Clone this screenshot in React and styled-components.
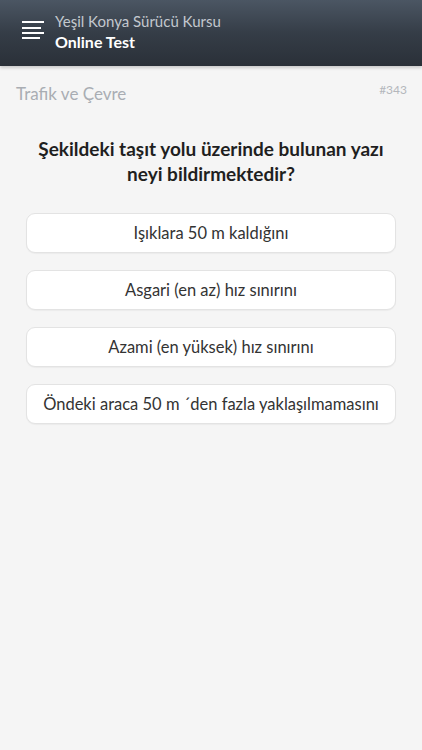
import React from 'react'
import styled, { createGlobalStyle } from 'styled-components'

const GlobalStyle = createGlobalStyle`
  html, body {
    margin: 0;
    padding: 0;
    background: #f5f5f5;
  }
  body {
    font-family: Lato, "Open Sans", "Noto Sans", sans-serif;
  }
`

const Page = styled.div`
  width: 422px;
  min-height: 750px;
  background: #f5f5f5;
  display: flex;
  flex-direction: column;
`

const Header = styled.header`
  height: 66px;
  box-sizing: border-box;
  padding: 0 0 0 22px;
  display: flex;
  align-items: center;
  gap: 11px;
  background: linear-gradient(to bottom, #4b5663 0%, #353d47 50%, #2a3038 100%);
  box-shadow: 0 2px 3px rgba(0, 0, 0, 0.18);
  position: relative;
  z-index: 1;
`

const MenuSvg = styled.svg`
  display: block;
  flex: none;
  margin-top: -4px;
`

const Titles = styled.div`
  display: flex;
  flex-direction: column;
  gap: 1px;
  margin-top: -3px;
`

const AppName = styled.div`
  color: #c3c8ce;
  font-size: 15px;
  line-height: 19px;
`

const ScreenName = styled.div`
  color: #ffffff;
  font-size: 16px;
  font-weight: 700;
  line-height: 20px;
`

const Body = styled.main`
  padding: 16px 26px 0;
  display: flex;
  flex-direction: column;
`

const TopRow = styled.div`
  display: flex;
  justify-content: space-between;
  align-items: flex-start;
  margin: 0 -11px 0 -10px;
`

const Category = styled.div`
  color: #a9adb3;
  font-size: 17px;
  line-height: 24px;
`

const Number = styled.div`
  color: #b4b7bc;
  font-size: 12px;
  line-height: 16px;
`

const Question = styled.h1`
  margin: 30px 0 27px;
  text-align: center;
  color: #1f1f1f;
  font-size: 19px;
  font-weight: 700;
  line-height: 25px;
`

const Options = styled.div`
  display: flex;
  flex-direction: column;
  gap: 17px;
`

const Option = styled.button`
  height: 40px;
  width: 100%;
  border: 1px solid #e3e3e3;
  border-radius: 9px;
  background: #ffffff;
  box-shadow: 0 1px 1px rgba(0, 0, 0, 0.04);
  color: #333333;
  font-family: inherit;
  font-size: 16.5px;
  text-align: center;
  padding: 0 6px;
  cursor: pointer;
`

const MenuIcon = () => (
  <MenuSvg width="22" height="20" viewBox="0 0 22 20">
    <rect x="0" y="0" width="22" height="2" fill="#ffffff" />
    <rect x="0" y="6" width="19" height="2" fill="#ffffff" />
    <rect x="0" y="11" width="22" height="2" fill="#ffffff" />
    <rect x="0" y="16" width="18" height="2" fill="#ffffff" />
  </MenuSvg>
)

const answers = [
  'Işıklara 50 m kaldığını',
  'Asgari (en az) hız sınırını',
  'Azami (en yüksek) hız sınırını',
  'Öndeki araca 50 m ´den fazla yaklaşılmamasını',
]

export default function App () {
  return (
    <Page>
      <GlobalStyle />
      <Header>
        <MenuIcon />
        <Titles>
          <AppName>Yeşil Konya Sürücü Kursu</AppName>
          <ScreenName>Online Test</ScreenName>
        </Titles>
      </Header>
      <Body>
        <TopRow>
          <Category>Trafik ve Çevre</Category>
          <Number>#343</Number>
        </TopRow>
        <Question>
          Şekildeki taşıt yolu üzerinde bulunan yazı<br />neyi bildirmektedir?
        </Question>
        <Options>
          {answers.map(a => <Option key={a}>{a}</Option>)}
        </Options>
      </Body>
    </Page>
  )
}
